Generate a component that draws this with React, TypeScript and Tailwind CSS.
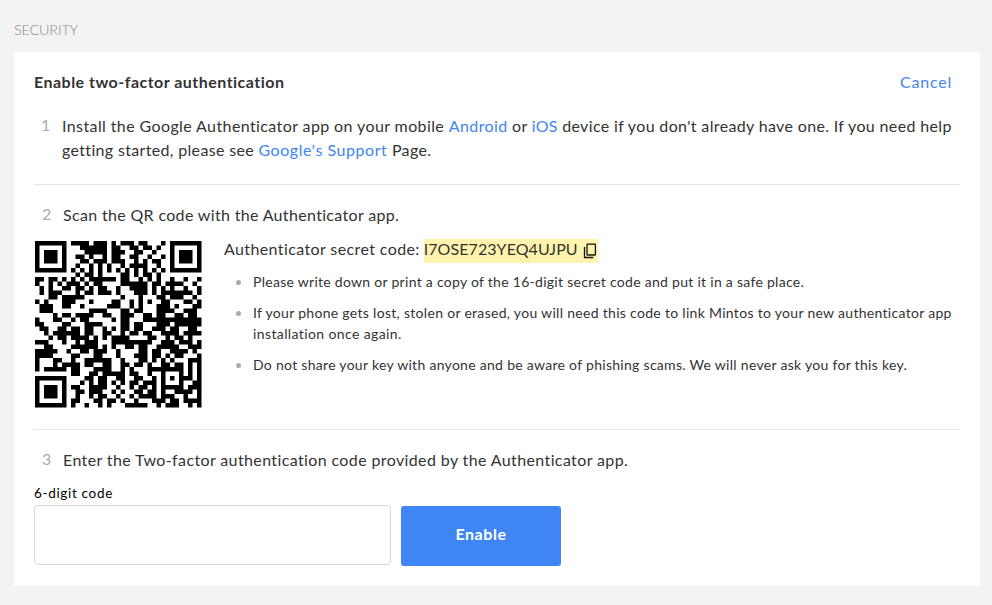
import React, { useLayoutEffect, useRef } from 'react';

const QR_ROWS = [
  '1111111011110111010111011000101111111',
  '1000001000111111011001101101001000001',
  '1011101000011111011100110010001011101',
  '1011101001101001011001100100101011101',
  '1011101000110111011100101011001011101',
  '1000001001001010100101111001001000001',
  '1111111010101010101010101010101111111',
  '0000000001011010000110101101000000000',
  '1101101010101111110110010101001001001',
  '1001010111010110000111111011011110010',
  '0101001101101011001001111010101001001',
  '0101110001011011101000111010111111101',
  '0001101111100000000100010001101110010',
  '1010001110001000011001010100110001101',
  '0111001100100000111001010001110100011',
  '0111000000001111000110110001111001110',
  '0000101101111001100111001101100110110',
  '1000110010110000010110001111111111111',
  '1100001100011110000110110001110111111',
  '0110011011011001010110110011101100110',
  '0010111111011001100101101100111101111',
  '0001011011110101011110000110010110100',
  '1110001001011100011111111100111011101',
  '0011000011111101010011011001111100111',
  '1111100100110111001000011011001111010',
  '1111000011000110001000111011010110001',
  '1000110010011111100100011010101000111',
  '1000101111011001100110110100110110101',
  '1011111011000111100101000111111110101',
  '0000000011001101111101100100100010101',
  '1111111000011011001100110010101011101',
  '1000001000101011010101101110100010011',
  '1011101011001111001001011010111110111',
  '1011101001101110010100110110100111101',
  '1011101001001011001001011110111001001',
  '1000001011000110110100100011101101111',
  '1111111010010010100011111001011100101',
];

const modulePath = QR_ROWS.flatMap((row, y) =>
  [...row].map((cell, x) => (cell === '1' ? `M${x} ${y}h1v1h-1z` : '')),
).join('');

function QrCode() {
  return (
    <svg className="block h-[166.5px] w-[166.5px] shrink-0" viewBox="0 0 37 37" aria-label="QR code">
      <path d={modulePath} fill="#000" />
    </svg>
  );
}

function CopyIcon() {
  return (
    <svg className="ml-[5px] h-[16px] w-[14px] shrink-0" viewBox="0 0 14 16" fill="none" stroke="#111" strokeWidth="1.3">
      <rect x="4" y="1.2" width="8.4" height="10.8" rx="0.5" />
      <path d="M1.5 4v10.5h8.8" />
    </svg>
  );
}

const link = 'text-[#3f85f4]';

/** Spreads a line's tracking so that its advance equals the given width. */
function Fit({ w, children }: { w: number; children: React.ReactNode }) {
  const ref = useRef<HTMLSpanElement>(null);
  useLayoutEffect(() => {
    const el = ref.current;
    if (!el) return;
    const adjust = () => {
      el.style.letterSpacing = '0px';
      const count = el.textContent?.length ?? 1;
      const spacing = (w - el.getBoundingClientRect().width) / count;
      el.style.letterSpacing = `${spacing}px`;
    };
    adjust();
    document.fonts.ready.then(adjust);
  }, [w]);
  return <span ref={ref} className="inline-block whitespace-nowrap">{children}</span>;
}

function Bullet({ children }: { children: React.ReactNode }) {
  return (
    <li className="flex pl-3">
      <i className="mr-[12px] mt-[9px] block h-[5px] w-[5px] shrink-0 rounded-full bg-[#aaa]" />
      <div>{children}</div>
    </li>
  );
}

function StepNumber({ children }: { children: React.ReactNode }) {
  return <span className="-mt-px w-[29px] pl-2 text-[16px] text-[#aaa]">{children}</span>;
}

export default function App() {
  return (
    <div className="h-[605px] w-[992px] overflow-hidden bg-[#f3f3f3] pl-[14px] pt-5 font-['Lato','Open_Sans',sans-serif] text-[#333]">
      <h2 className="h-8 whitespace-nowrap text-[14.5px] font-light leading-[19px] text-[#888]">
        <Fit w={64}>SECURITY</Fit>
      </h2>
      <main className="h-[534px] w-[966px] bg-white px-5 pt-[18px]">
        <header className="flex h-6 items-center justify-between pr-2 text-[16px]">
          <h1 className="font-bold"><Fit w={251}>Enable two-factor authentication</Fit></h1>
          <a className={link}><Fit w={52}>Cancel</Fit></a>
        </header>

        <section className="mt-5 flex h-[71px] border-b border-[#e6e6e6] text-[16px] leading-6">
          <span className="-mt-px w-7 pl-[7px] text-[#aaa]">1</span>
          <div className="whitespace-nowrap">
            <div className="flex h-6">
              <Fit w={387}>Install the Google Authenticator app on your mobile&nbsp;</Fit>
              <a className={link}><Fit w={59}>Android</Fit></a>
              <Fit w={24}>&nbsp;or&nbsp;</Fit>
              <a className={link}><Fit w={26}>iOS</Fit></a>
              <Fit w={394}>&nbsp;device if you don't already have one. If you need help</Fit>
            </div>
            <div className="flex h-6">
              <Fit w={196}>getting started, please see&nbsp;</Fit>
              <a className={link}><Fit w={129}>Google's Support</Fit></a>
              <Fit w={44}>&nbsp;Page.</Fit>
            </div>
          </div>
        </section>

        <section className="h-[245px] border-b border-[#e6e6e6] pt-[18px]">
          <div className="flex h-6 text-[16px] leading-6">
            <StepNumber>2</StepNumber>
            <Fit w={336.5}>Scan the QR code with the Authenticator app.</Fit>
          </div>
          <div className="flex pl-px pt-[14px]">
            <QrCode />
            <div className="ml-[22.5px] flex-1">
              <div className="-mt-[4px] flex h-[26px] items-start text-[16px] leading-6">
                <Fit w={196}>Authenticator secret code:</Fit>
                <span className="ml-1 mt-[2px] flex h-6 w-[174px] items-center bg-[#fff3ad]">
                  <span className="-mt-1"><Fit w={154}>I7OSE723YEQ4UJPU</Fit></span>
                  <CopyIcon />
                </span>
              </div>
              <ul className="mt-[8px] flex flex-col gap-[10px] text-[14px] leading-[21px]">
                <Bullet><Fit w={551}>Please write down or print a copy of the 16-digit secret code and put it in a safe place.</Fit></Bullet>
                <Bullet>
                  <Fit w={699}>If your phone gets lost, stolen or erased, you will need this code to link Mintos to your new authenticator app</Fit>
                  <br />
                  <Fit w={149}>installation once again.</Fit>
                </Bullet>
                <Bullet><Fit w={654}>Do not share your key with anyone and be aware of phishing scams. We will never ask you for this key.</Fit></Bullet>
              </ul>
            </div>
          </div>
        </section>

        <section className="pt-[18px]">
          <div className="flex h-6 text-[16px] leading-6">
            <StepNumber>3</StepNumber>
            <Fit w={566}>Enter the Two-factor authentication code provided by the Authenticator app.</Fit>
          </div>
          <div className="flex">
            <label className="mt-[11px] block text-[13.5px] leading-[20px] text-black">
              <Fit w={79}>6-digit code</Fit>
              <input className="mt-[2px] block h-[60px] w-[357px] rounded-[4px] border border-[#d8d8d8] bg-white px-3 outline-none" />
            </label>
            <button className="ml-[10px] mt-[34px] h-[60px] w-[160px] rounded-[3px] bg-[#3f85f4] pb-[4px] text-[16px] font-bold text-white">
              <Fit w={51}>Enable</Fit>
            </button>
          </div>
        </section>
      </main>
    </div>
  );
}
